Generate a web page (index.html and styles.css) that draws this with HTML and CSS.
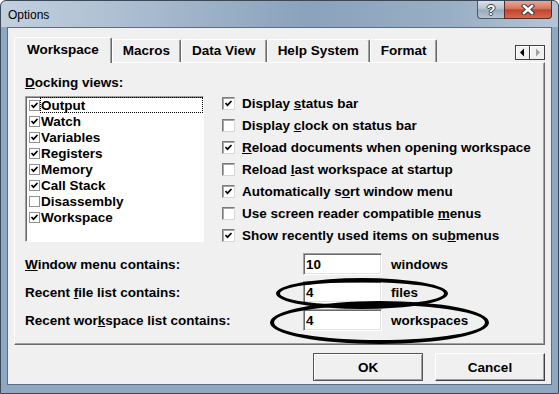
FILE: index.html
```html
<!DOCTYPE html>
<html>
<head>
  <title>Options</title>
  <link rel="stylesheet" href="styles.css">
</head>
<body>
  <div class="window">
    <div class="titlebar">
      <span class="title">Options</span>
      <div class="caption-buttons">
        <span class="cap-btn help">?</span>
        <span class="cap-btn close">
          <svg width="14" height="11" viewBox="0 0 14 11">
            <path d="M3 2 L11 9 M11 2 L3 9" stroke="#3b3f47" stroke-width="4.5" stroke-linecap="square"/>
            <path d="M3 2 L11 9 M11 2 L3 9" stroke="#fff" stroke-width="2.5" stroke-linecap="square"/>
          </svg>
        </span>
      </div>
    </div>

    <div class="client">
      <div class="tabs">
        <div class="tab active">Workspace</div>
        <div class="tab">Macros</div>
        <div class="tab">Data View</div>
        <div class="tab">Help System</div>
        <div class="tab">Format</div>
        <div class="tab-scroll">
          <span class="scroll-btn">
            <svg width="7" height="9" viewBox="0 0 7 9"><polygon points="5,0.5 5,8.5 1,4.5" fill="#000"/></svg>
          </span>
          <span class="scroll-btn">
            <svg width="7" height="9" viewBox="0 0 7 9"><polygon points="2,0.5 2,8.5 6,4.5" fill="#a0a0a0"/></svg>
          </span>
        </div>
      </div>

      <div class="panel">
        <div class="top">
          <div class="docking">
            <div class="label"><u>D</u>ocking views:</div>
            <ul class="listbox">
              <li><span class="mini-check on"></span><span class="item-text focused">Output</span></li>
              <li><span class="mini-check on"></span><span class="item-text">Watch</span></li>
              <li><span class="mini-check on"></span><span class="item-text">Variables</span></li>
              <li><span class="mini-check on"></span><span class="item-text">Registers</span></li>
              <li><span class="mini-check on"></span><span class="item-text">Memory</span></li>
              <li><span class="mini-check on"></span><span class="item-text">Call Stack</span></li>
              <li><span class="mini-check"></span><span class="item-text">Disassembly</span></li>
              <li><span class="mini-check on"></span><span class="item-text">Workspace</span></li>
            </ul>
          </div>

          <ul class="options">
            <li><span class="check on"></span><span>Display <u>s</u>tatus bar</span></li>
            <li><span class="check"></span><span>Display <u>c</u>lock on status bar</span></li>
            <li><span class="check on"></span><span><u>R</u>eload documents when opening workspace</span></li>
            <li><span class="check"></span><span>Reload <u>l</u>ast workspace at startup</span></li>
            <li><span class="check on"></span><span>Automatically s<u>o</u>rt window menu</span></li>
            <li><span class="check"></span><span>Use screen reader compatible <u>m</u>enus</span></li>
            <li><span class="check on"></span><span>Show recently used items on su<u>b</u>menus</span></li>
          </ul>
        </div>

        <div class="counts">
          <label for="winCount"><u>W</u>indow menu contains:</label>
          <input type="text" id="winCount" value="10">
          <span>windows</span>

          <label for="fileCount">Recent <u>f</u>ile list contains:</label>
          <input type="text" id="fileCount" value="4">
          <span>files</span>

          <label for="wsCount">Recent wor<u>k</u>space list contains:</label>
          <input type="text" id="wsCount" value="4">
          <span>workspaces</span>
        </div>
      </div>

      <div class="buttons">
        <button class="btn default">OK</button>
        <button class="btn">Cancel</button>
      </div>
    </div>

    <div class="mark mark-files"></div>
    <div class="mark mark-workspaces"></div>
  </div>
</body>
</html>
```

FILE: styles.css
```css
* {
  box-sizing: border-box;
}

body {
  margin: 0;
  font-family: "Liberation Sans", Arial, sans-serif;
  color: #000;
}

.window {
  position: relative;
  width: 559px;
  height: 394px;
  border: 1px solid #3a4858;
  border-radius: 6px 6px 0 0;
  padding: 0 6px 8px;
  display: flex;
  flex-direction: column;
  background: linear-gradient(to bottom, transparent 26px, #8fa8c2 26px),
              linear-gradient(to right, #c2d0de 0%, #a9bccf 25%, #8aa2bb 55%, #98aec4 80%, #b4c5d6 100%);
}

.titlebar {
  height: 26px;
  display: flex;
  align-items: flex-start;
}

.title {
  font-size: 12px;
  line-height: 14px;
  margin: 7px 0 0 1px;
}

.caption-buttons {
  margin-left: auto;
  display: flex;
}

.cap-btn {
  height: 18px;
  display: flex;
  align-items: center;
  justify-content: center;
  border: 1px solid #4b5868;
  border-top: none;
}

.help {
  width: 27px;
  border-radius: 0 0 0 4px;
  border-right: none;
  background: linear-gradient(#d9e1ea, #b3c1cf 48%, #97a9bc 52%, #b7c5d3);
  color: #fff;
  font-weight: bold;
  font-size: 14px;
  text-shadow: 1px 0 #3b3f47, -1px 0 #3b3f47, 0 1px #3b3f47, 0 -1px #3b3f47;
}

.close {
  width: 48px;
  border-radius: 0 0 4px 0;
  border-color: #5b2a22;
  background: linear-gradient(#e8a796, #d5775f 45%, #c2432b 52%, #d36b50);
}

.client {
  flex: 1;
  background: #f0f0f0;
  border: 1px solid #5d6e80;
  padding: 9px 6px 0;
  display: flex;
  flex-direction: column;
}

.tabs {
  display: flex;
  align-items: flex-end;
  height: 25px;
  font-size: 13.5px;
  font-weight: bold;
}

.tab {
  height: 23px;
  line-height: 21px;
  padding: 0 10px;
  border-top: 1px solid #fff;
  border-left: 1px solid #fff;
  border-right: 1px solid #696969;
  border-radius: 2px 2px 0 0;
  box-shadow: inset -1px 0 #a0a0a0;
}

.tab.active {
  position: relative;
  z-index: 1;
  height: 26px;
  margin-bottom: -1px;
  line-height: 24px;
  padding: 0 12px;
  background: #f0f0f0;
}

.tab-scroll {
  margin-left: auto;
  align-self: flex-start;
  margin-top: 8px;
  display: flex;
}

.scroll-btn {
  width: 15px;
  height: 15px;
  display: flex;
  align-items: center;
  justify-content: center;
  border: 1px solid #404040;
  box-shadow: inset 1px 1px #fff;
  background: #f0f0f0;
}

.scroll-btn + .scroll-btn {
  border-left: none;
}

.panel {
  height: 283px;
  border: 1px solid;
  border-color: #fff #696969 #696969 #fff;
  box-shadow: inset -1px -1px #a0a0a0;
  padding: 12px 0 0 10px;
  font-size: 13.5px;
  font-weight: bold;
}

.top {
  display: flex;
  align-items: flex-start;
  height: 167px;
}

.docking {
  width: 179px;
}

.label {
  line-height: 16px;
}

.listbox {
  list-style: none;
  margin: 5px 0 0;
  padding: 0;
  height: 146px;
  background: #fff;
  border: 1px solid;
  border-color: #a0a0a0 #fff #fff #a0a0a0;
  box-shadow: inset 1px 1px #696969;
}

.listbox li {
  display: flex;
  align-items: center;
  height: 16px;
  padding-left: 3px;
}

.item-text {
  flex: 1;
  height: 16px;
  line-height: 15px;
  border: 1px solid transparent;
}

.item-text.focused {
  border: 1px dotted #000;
}

.mini-check {
  width: 11px;
  height: 11px;
  border: 1px solid #8f8f8f;
  background: #fff no-repeat center;
}

.mini-check.on,
.check.on {
  background-image: url("data:image/svg+xml;utf8,<svg xmlns='http://www.w3.org/2000/svg' width='9' height='9' viewBox='0 0 9 9'><polyline points='1.5,4 3.5,6.2 7.5,2' fill='none' stroke='black' stroke-width='1.7'/></svg>");
}

.options {
  list-style: none;
  margin: 0 0 0 18px;
  padding: 17px 0 0;
}

.options li {
  display: flex;
  align-items: center;
  height: 22px;
  white-space: nowrap;
}

.check {
  width: 13px;
  height: 13px;
  margin-right: 7px;
  border: 1px solid;
  border-color: #7a7a7a #d8d8d8 #d8d8d8 #7a7a7a;
  box-shadow: inset 1px 1px #a8a8a8;
  background: #fff no-repeat center;
}

.counts {
  display: grid;
  grid-template-columns: 269px 79px auto;
  grid-auto-rows: 28px;
  column-gap: 9px;
  align-items: center;
  margin-top: 8px;
}

.counts input {
  width: 79px;
  height: 22px;
  padding: 0 2px;
  font: inherit;
  border: 1px solid;
  border-color: #a0a0a0 #fff #fff #a0a0a0;
  box-shadow: inset 1px 1px #696969, inset -1px -1px #e3e3e3;
  background: #fff;
  outline: none;
}

.buttons {
  display: flex;
  justify-content: flex-end;
  gap: 12px;
  margin-top: 8px;
}

.btn {
  width: 110px;
  height: 28px;
  font-family: inherit;
  font-size: 13.5px;
  font-weight: bold;
  background: #f0f0f0;
  border: 1px solid;
  border-color: #fff #404040 #404040 #fff;
  box-shadow: inset -1px -1px #a0a0a0;
  padding: 0;
}

.btn.default {
  border-color: #555;
  box-shadow: inset 1px 1px #fff, inset -1px -1px #a0a0a0;
}

.mark {
  position: absolute;
  border: 4px solid #000;
  border-radius: 50%;
}

.mark-files {
  left: 275px;
  top: 277px;
  width: 172px;
  height: 31px;
}

.mark-workspaces {
  left: 269px;
  top: 300px;
  width: 219px;
  height: 43px;
}
```
